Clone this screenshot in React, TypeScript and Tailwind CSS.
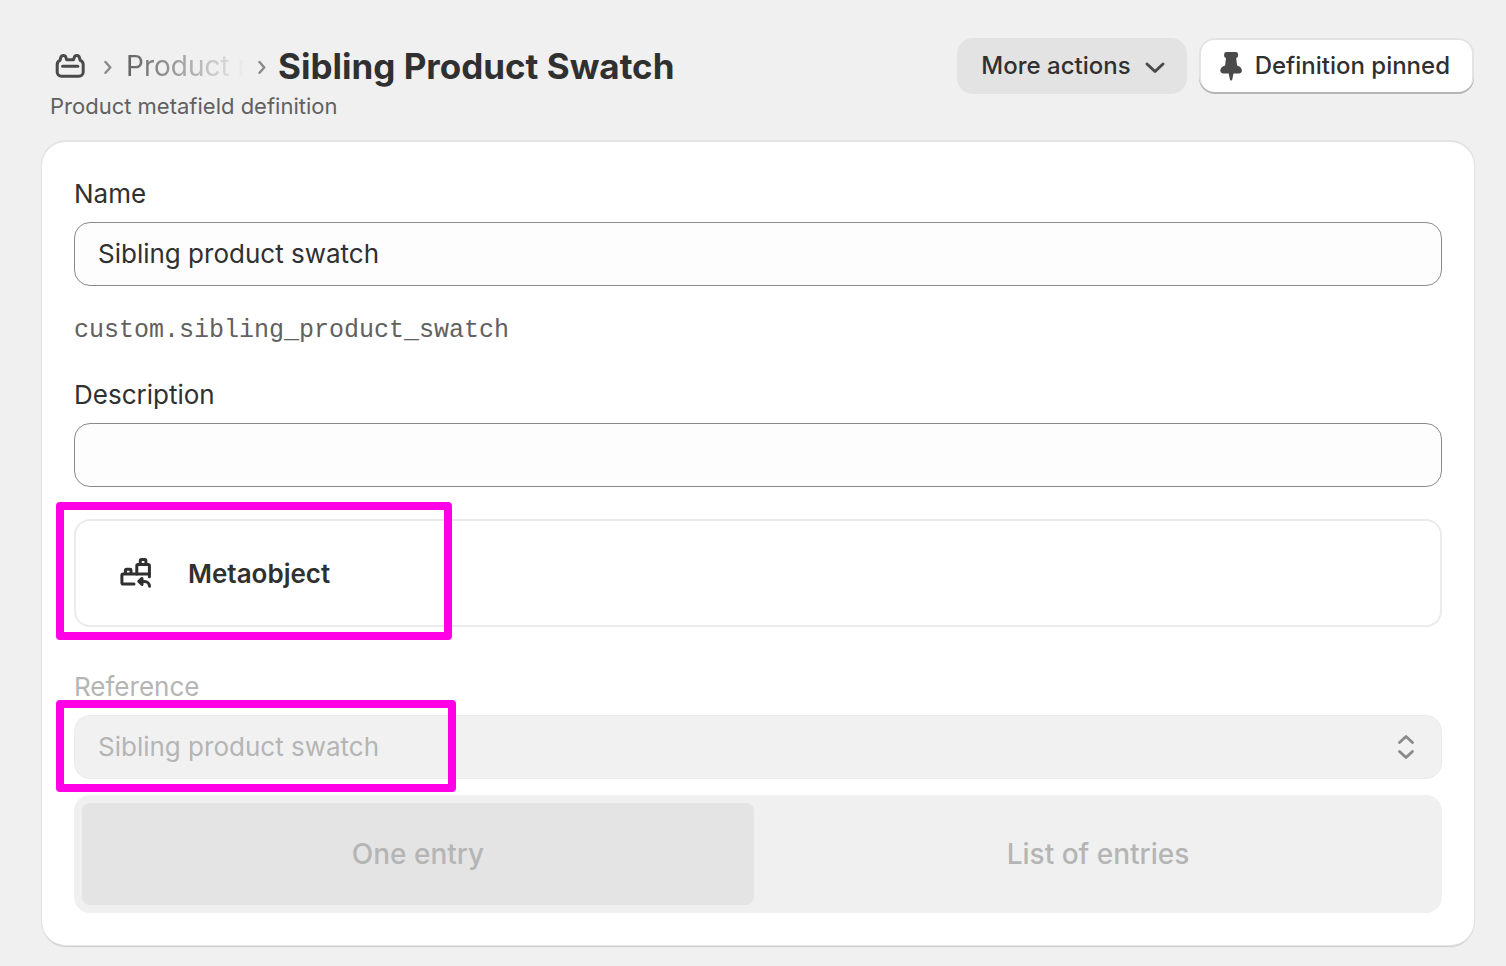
import { useState } from "react";

const entryOptions = [
  { label: "One entry", selected: true },
  { label: "List of entries", selected: false },
];

function MetafieldIcon() {
  return (
    <svg viewBox="0 0 40 40" className="h-10 w-10" fill="none" stroke="#4a4a4a" strokeWidth="3" strokeLinecap="round" strokeLinejoin="round" aria-hidden="true">
      <path d="M7.2 18.5a4.5 4.5 0 0 1 2.8-4.100l.8-2.900a2.700 2.700 0 0 1 5.200 0l.7 2.200h6.800l.7-2.200a2.700 2.700 0 0 1 5.200 0l.8 2.900a4.500 4.500 0 0 1 3 4.100V26a4.200 4.200 0 0 1-4.200 4.200H11.400a4.200 4.200 0 0 1-4.200-4.200z" />
      <path d="M12.600 20.300h15.200" />
    </svg>
  );
}

function MetaobjectIcon() {
  return (
    <svg viewBox="0 0 40 40" className="h-10 w-10" fill="none" stroke="#303030" strokeWidth="3" strokeLinecap="round" strokeLinejoin="round" aria-hidden="true">
      <path d="M18 31H7.200a1.300 1.300 0 0 1-1.300-1.300v-7.400A1.300 1.300 0 0 1 7.200 21h26.200" />
      <path d="M9.400 20.500v-3.300a.9.9 0 0 1 .9-.9h3.800a.9.9 0 0 1 .9.9v3.300" />
      <path d="M20.800 21v-8.300a1.300 1.300 0 0 1 1.300-1.300h10a1.300 1.300 0 0 1 1.300 1.300v11" />
      <path d="M24.300 11V7.400a.9.9 0 0 1 .9-.9h3.800a.9.9 0 0 1 .9.900V11" />
      <path d="M26 25.400l-3.200 3 3.200 3z" fill="#303030" />
      <path d="M25 28.400h3.500a5 5 0 0 1 5 4.800" />
    </svg>
  );
}

function PinIcon() {
  return (
    <svg viewBox="0 0 40 40" className="h-10 w-10" fill="#4a4a4a" aria-hidden="true">
      <path d="M15.500 6h9.200a2.400 2.400 0 0 1 2.400 2.400v1.400a2.400 2.400 0 0 1-1.900 2.300l.9 7.300c2.600.6 4.800 2.600 4.800 5.200 0 1.700-1.100 2.900-2.800 2.900h-5.600l-1.200 5.800c-.2 1.600-2.200 1.600-2.400 0l-1.200-5.800h-5.600c-1.700 0-2.800-1.200-2.800-2.900 0-2.600 2.200-4.600 4.800-5.200l.9-7.300a2.400 2.400 0 0 1-1.900-2.300V8.400a2.400 2.400 0 0 1 2.400-2.400z" />
    </svg>
  );
}

function Separator() {
  return (
    <svg viewBox="0 0 8 16" className="h-4 w-2 shrink-0" fill="none" stroke="#8a8a8a" strokeWidth="2.400" strokeLinecap="round" strokeLinejoin="round" aria-hidden="true">
      <path d="M1.500 4l4.800 5.500-4.800 5.300" />
    </svg>
  );
}

export default function App() {
  const [name, setName] = useState("Sibling product swatch");
  const [description, setDescription] = useState("");

  return (
    <div className="min-h-screen bg-[#f0f0f0] pt-[38px] pr-8 pb-5 pl-[42px] font-['Inter',sans-serif] text-[26px] text-[#303030]">
      {/* Page header */}
      <header className="pb-6">
        <div className="flex items-center justify-between">
          <nav className="flex items-center pl-2">
            <a href="#metafields" aria-label="Metafields">
              <MetafieldIcon />
            </a>
            <span className="flex w-9 justify-center">
              <Separator />
            </span>
            <a
              href="#products"
              className="w-30 overflow-hidden whitespace-nowrap text-[28px] leading-10 text-[#616161] [mask-image:linear-gradient(to_right,black,transparent)]"
            >
              Product metafields
            </a>
            <span className="flex w-8 justify-center">
              <Separator />
            </span>
            <h1 className="text-[35px] leading-10 font-[650]">Sibling Product Swatch</h1>
          </nav>

          <div className="flex items-center gap-3">
            <button className="flex h-14 items-center gap-3 rounded-2xl bg-[#e3e3e3] pr-5 pl-6 text-2xl font-[550]">
              More actions
              <svg viewBox="0 0 24 24" className="h-6 w-6" fill="none" stroke="#4a4a4a" strokeWidth="3" strokeLinecap="round" strokeLinejoin="round" aria-hidden="true">
                <path d="M4 10l8 7.500 8-7.500" />
              </svg>
            </button>
            <button className="flex h-14 items-center gap-1 rounded-2xl bg-white pr-6 pl-3 text-2xl font-[550] shadow-[inset_0_-2px_0_#b5b5b5,inset_0_2px_0_#e3e3e3,inset_2px_0_0_#e3e3e3,inset_-2px_0_0_#e3e3e3]">
              <PinIcon />
              Definition pinned
            </button>
          </div>
        </div>
        <p className="pl-2 text-[22px] leading-6 text-[#616161]">Product metafield definition</p>
      </header>

      {/* Definition form */}
      <main className="rounded-3xl bg-white p-8 shadow-[0_0_0_1px_#e3e3e3,0_-1px_0_1px_#e3e3e3,0_2px_1px_#cccccc]">
        <label htmlFor="name" className="mb-2 block leading-10">
          Name
        </label>
        <input
          id="name"
          value={name}
          onChange={(e) => setName(e.target.value)}
          className="block h-16 w-full rounded-2xl border border-[#8a8a8a] bg-[#fdfdfd] px-[23px] pb-0.5"
        />
        <p className="mt-6 mb-6 font-['Liberation_Mono',monospace] text-[25px] leading-[41px] text-[#616161]">
          custom.sibling_product_swatch
        </p>

        <label htmlFor="description" className="mb-2 block leading-10">
          Description
        </label>
        <input
          id="description"
          value={description}
          onChange={(e) => setDescription(e.target.value)}
          className="block h-16 w-full rounded-2xl border border-[#8a8a8a] bg-[#fdfdfd] px-[23px] pb-0.5"
        />

        <div className="relative mt-8 mb-10 flex h-27 items-center gap-8 rounded-2xl border-2 border-[#ebebeb] px-10">
          <MetaobjectIcon />
          <span className="font-semibold">Metaobject</span>
          <div className="pointer-events-none absolute -top-[19px] -left-5 h-[138px] w-[396px] rounded border-8 border-[#ff00e6]" />
        </div>

        <label htmlFor="reference" className="mb-2 block leading-10 text-[#b5b5b5]">
          Reference
        </label>
        <div className="relative">
          <select
            id="reference"
            disabled
            className="block h-16 w-full appearance-none rounded-2xl border border-[#ebebeb] bg-[#f1f1f1] px-[23px] pb-0.5 text-[#b5b5b5] opacity-100"
          >
            <option>Sibling product swatch</option>
          </select>
          <svg viewBox="0 0 24 32" className="pointer-events-none absolute top-4 right-6 h-8 w-6" fill="none" stroke="#8a8a8a" strokeWidth="2.800" strokeLinecap="round" strokeLinejoin="round" aria-hidden="true">
            <path d="M5.500 11.500l6.500-6 6.500 6M5.500 20.500l6.500 6 6.500-6" />
          </svg>
          <div className="pointer-events-none absolute -top-[15px] -left-[18px] h-[92px] w-[400px] rounded border-8 border-[#ff00e6]" />
        </div>

        <div className="mt-4 grid grid-cols-2 gap-2 rounded-2xl bg-[#f0f0f0] p-2">
          {entryOptions.map((option) => (
            <button
              key={option.label}
              disabled
              aria-pressed={option.selected}
              className={`h-[102px] rounded-lg text-[28px] font-[550] text-[#b5b5b5] ${
                option.selected ? "bg-[#e4e4e4]" : ""
              }`}
            >
              {option.label}
            </button>
          ))}
        </div>
      </main>
    </div>
  );
}
